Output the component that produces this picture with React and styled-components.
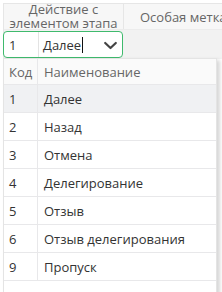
import React from "react";
import styled, { createGlobalStyle } from "styled-components";

const Global = createGlobalStyle`
  html, body { margin: 0; padding: 0; background: #ffffff; }
  body { font-family: "Open Sans", "Noto Sans", sans-serif; font-size: 13px; color: #333; overflow: hidden; }
  * { box-sizing: border-box; }
`;

const Page = styled.div`
  position: relative;
  width: 222px;
  height: 292px;
  padding: 3px 0 0 3px;
  overflow: hidden;
`;

const Grid = styled.div`
  display: flex;
  flex-direction: column;
  width: 340px;
  border-top: 1px solid #e6e6e6;
  border-left: 1px solid #e6e6e6;
`;

const HeadRow = styled.div`
  display: flex;
  height: 26px;
  background: #f7f7f7;
  border-bottom: 1px solid #ececec;
`;

const HeadCell = styled.div`
  width: ${(p) => p.$w}px;
  flex: none;
  display: flex;
  align-items: center;
  justify-content: ${(p) => (p.$left ? "flex-start" : "center")};
  padding-left: ${(p) => p.$pl || 0}px;
  text-align: center;
  color: #666;
  font-size: 13px;
  line-height: 14px;
  white-space: nowrap;
  border-right: 1px solid #e6e6e6;
`;

const HeadText = styled.div`
  margin-top: -2px;
`;

const EditRow = styled.div`
  display: flex;
  height: 29px;
  background: #f2f2f2;
  padding-top: 1px;
`;

const Editor = styled.div`
  width: 120px;
  height: 27px;
  margin-left: -1px;
  display: flex;
  align-items: stretch;
  background: #fff;
  border: 1px solid #3fba6d;
  border-radius: 4px;
  flex: none;
`;

const CodeField = styled.div`
  width: 35px;
  display: flex;
  align-items: center;
  padding-left: 5px;
  border-right: 1px solid #e3e3e3;
  color: #333;
`;

const NameField = styled.div`
  flex: 1;
  display: flex;
  align-items: center;
  padding-left: 4px;
  color: #333;
`;

const Caret = styled.span`
  display: inline-block;
  width: 1px;
  height: 16px;
  background: #111;
  margin-left: 1px;
`;

const Chevron = styled.svg`
  margin-left: auto;
  margin-right: 4px;
  margin-top: 2px;
  align-self: center;
`;

const Dropdown = styled.div`
  position: absolute;
  left: 3px;
  top: 58px;
  width: 214px;
  height: 240px;
  background: #fff;
  border: 1px solid #e4e4e4;
  box-shadow: 3px 2px 4px rgba(0, 0, 0, 0.16);
  display: flex;
  flex-direction: column;
`;

const DRow = styled.div`
  display: flex;
  flex: none;
  height: ${(p) => (p.$head ? 26 : 28)}px;
  background: ${(p) => (p.$head ? "#fafafa" : p.$active ? "#f0f1f3" : "#fff")};
  border-bottom: 1px solid #e8e8ea;
  color: ${(p) => (p.$head ? "#666" : "#333")};
`;

const DCode = styled.div`
  width: 34px;
  flex: none;
  display: flex;
  align-items: center;
  padding-left: 5px;
  border-right: 1px solid ${(p) => (p.$blank ? "transparent" : "#e8e8ea")};
`;

const DName = styled.div`
  flex: 1;
  display: flex;
  align-items: center;
  padding-left: 6px;
  white-space: nowrap;
`;

const items = [
  ["1", "Далее"],
  ["2", "Назад"],
  ["3", "Отмена"],
  ["4", "Делегирование"],
  ["5", "Отзыв"],
  ["6", "Отзыв делегирования"],
  ["9", "Пропуск"],
];

export default function App() {
  return (
    <>
      <Global />
      <Page>
        <Grid>
          <HeadRow>
            <HeadCell $w={120}>
              <HeadText>Действие с<br />элементом этапа</HeadText>
            </HeadCell>
            <HeadCell $w={220} $left $pl={16}>Особая метка</HeadCell>
          </HeadRow>
          <EditRow>
            <Editor>
              <CodeField>1</CodeField>
              <NameField>
                Далее<Caret />
                <Chevron width="15" height="9" viewBox="0 0 15 9">
                  <path d="M2.2 2 L7.5 7 L12.8 2" fill="none" stroke="#444" strokeWidth="2.2" strokeLinecap="round" strokeLinejoin="round" />
                </Chevron>
              </NameField>
            </Editor>
          </EditRow>
        </Grid>
        <Dropdown>
          <DRow $head>
            <DCode>Код</DCode>
            <DName>Наименование</DName>
          </DRow>
          {items.map(([c, n], i) => (
            <DRow key={c} $active={i === 0}>
              <DCode>{c}</DCode>
              <DName>{n}</DName>
            </DRow>
          ))}
          <DRow>
            <DCode $blank />
          </DRow>
        </Dropdown>
      </Page>
    </>
  );
}
